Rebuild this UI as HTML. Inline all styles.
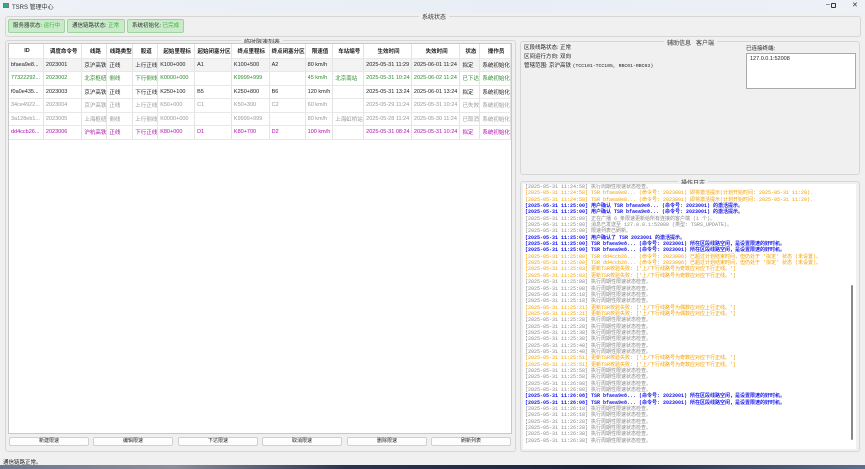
<!DOCTYPE html>
<html><head><meta charset="utf-8"><style>
*{box-sizing:border-box;margin:0;padding:0}
body{width:865px;height:469px;overflow:hidden;background:#f0f0f0;font-family:"Liberation Sans","Noto Sans CJK SC",sans-serif;font-size:6px;color:#222;position:relative}
.a{position:absolute}
.title{left:0;top:0;width:865px;height:13px;background:linear-gradient(90deg,#eef2f7,#e9eef6 60%,#eef1f6);}
.grp{border:1px solid #d6d6d6;border-radius:3px}
.gt{background:#f0f0f0;padding:0 3px;font-size:6px;color:#333}
.badge{top:19px;height:14px;background:#c9ebc9;border:1px solid #9fd49f;border-radius:2px;font-size:5.5px;line-height:12px;padding-left:4px;color:#333}
.badge span{color:#3cb03c}
table{border-collapse:collapse;table-layout:fixed;font-size:5.5px}
td,th{height:13.5px;white-space:nowrap;overflow:hidden;padding-left:2px;border-right:1px solid #e4e4e4;border-bottom:1px solid #e8e8e8;text-align:left;font-weight:normal}
th{height:14px;font-weight:bold;text-align:center;background:#fff}
.g td{color:#2e8b2e}.p td{color:#b010b0}.l td{color:#999}
.btn{top:437px;height:9px;background:#fdfdfd;border:1px solid #d0d0d0;border-radius:2px;font-size:5px;text-align:center;line-height:7px;width:80px}
.log div{height:6.35px;line-height:6.35px;font-size:5px;white-space:nowrap;font-family:"Liberation Mono","Noto Sans CJK SC",monospace}
.k{color:#888}.o{color:#f5a000}.b{color:#1818f0;font-weight:bold}
</style></head><body>
<div class="a title"></div>
<div class="a" style="left:3px;top:3px;width:6px;height:5px;border:1px solid #777;background:#3a8"></div>
<div class="a" style="left:12px;top:2px;font-size:6px;color:#333">TSRS 管理中心</div>
<div class="a" style="left:826px;top:1px;font-size:7px;color:#333">–</div>
<div class="a" style="left:831px;top:3px;width:5px;height:5px;border:1px solid #333;border-radius:1px"></div>
<div class="a" style="left:852px;top:1px;font-size:7px;color:#333">✕</div>

<div class="a grp" style="left:5px;top:16px;width:856px;height:21px"></div>
<div class="a gt" style="left:419px;top:12px">系统状态</div>
<div class="a badge" style="left:8px;width:57px">服务器状态: <span>运行中</span></div>
<div class="a badge" style="left:67px;width:58px">通信链路状态: <span>正常</span></div>
<div class="a badge" style="left:127px;width:57px">系统初始化: <span>已完成</span></div>

<div class="a grp" style="left:5px;top:40px;width:511px;height:412px"></div>
<div class="a gt" style="left:241px;top:37px">临时限速列表</div>
<div class="a" style="left:8px;top:43px;width:504px;height:391px;background:#fff;border:1px solid #c8c8c8">
<table>
<colgroup><col style="width:35px"><col style="width:40px"><col style="width:24px"><col style="width:26px"><col style="width:24px"><col style="width:38px"><col style="width:37px"><col style="width:39px"><col style="width:35px"><col style="width:28px"><col style="width:31px"><col style="width:48px"><col style="width:49px"><col style="width:20px"><col style="width:28px"></colgroup>
<tr><th>ID</th><th>调度命令号</th><th>线路</th><th>线路类型</th><th>股道</th><th>起始里程标</th><th>起始闭塞分区</th><th>终点里程标</th><th>终点闭塞分区</th><th>限速值</th><th>车站编号</th><th>生效时间</th><th>失效时间</th><th>状态</th><th>操作员</th></tr>
<tr style="background:#f3f3f3"><td>bfaea9e8...</td><td>2023001</td><td>京沪高铁</td><td>正线</td><td>上行正线</td><td>K100+000</td><td>A1</td><td>K100+500</td><td>A2</td><td>80 km/h</td><td></td><td>2025-05-31 11:29</td><td>2025-06-01 11:24</td><td>拟定</td><td>系统初始化</td></tr>
<tr class="g"><td>77322292...</td><td>2023002</td><td>北京枢纽</td><td>侧线</td><td>下行侧线</td><td>K0000+000</td><td></td><td>K9999+999</td><td></td><td>45 km/h</td><td>北京南站</td><td>2025-05-31 10:24</td><td>2025-06-02 11:24</td><td>已下达</td><td>系统初始化</td></tr>
<tr><td>f0a0e435...</td><td>2023003</td><td>京沪高铁</td><td>正线</td><td>下行正线</td><td>K250+100</td><td>B5</td><td>K250+800</td><td>B6</td><td>120 km/h</td><td></td><td>2025-05-31 13:24</td><td>2025-06-01 13:24</td><td>拟定</td><td>系统初始化</td></tr>
<tr class="l"><td>34ce4922...</td><td>2023004</td><td>京沪高铁</td><td>正线</td><td>上行正线</td><td>K50+000</td><td>C1</td><td>K50+300</td><td>C2</td><td>60 km/h</td><td></td><td>2025-05-29 11:24</td><td>2025-05-31 10:24</td><td>已失效</td><td>系统初始化</td></tr>
<tr class="l"><td>3a128eb1...</td><td>2023005</td><td>上海枢纽</td><td>侧线</td><td>上行侧线</td><td>K0000+000</td><td></td><td>K9999+999</td><td></td><td>80 km/h</td><td>上海虹桥站</td><td>2025-05-28 11:24</td><td>2025-05-30 11:24</td><td>已取消</td><td>系统初始化</td></tr>
<tr class="p"><td>dd4ccb26...</td><td>2023006</td><td>沪杭高铁</td><td>正线</td><td>下行正线</td><td>K80+000</td><td>D1</td><td>K80+700</td><td>D2</td><td>100 km/h</td><td></td><td>2025-05-31 08:24</td><td>2025-05-31 10:24</td><td>拟定</td><td>系统初始化</td></tr>
</table></div>
<div class="a btn" style="left:9px">新建限速</div>
<div class="a btn" style="left:93px">编辑限速</div>
<div class="a btn" style="left:178px">下达限速</div>
<div class="a btn" style="left:262px">取消限速</div>
<div class="a btn" style="left:347px">删除限速</div>
<div class="a btn" style="left:431px">刷新列表</div>
<div class="a" style="left:3px;top:458px;font-size:5.5px">通信链路正常。</div>
<div class="a" style="left:0;top:465px;width:865px;height:4px;background:linear-gradient(90deg,#6b7890,#8a8e9c 20%,#2a3450 40%,#1c2540 70%,#5a7090)"></div>

<div class="a grp" style="left:520px;top:41px;width:340px;height:134px"></div>
<div class="a gt" style="left:664px;top:38px">辅助信息&nbsp;&nbsp; 客户端</div>
<div class="a" style="left:524px;top:44px;font-size:5.5px;line-height:9px">区段线路状态: 正常<br>区间运行方向: 双向<br>管辖范围: 京沪高铁 <span style="font-family:'Liberation Mono',monospace;font-size:4.8px">(TCC101-TCC105, RBC01-RBC03)</span></div>
<div class="a" style="left:746px;top:44px;font-size:5.5px">已连接终端:</div>
<div class="a" style="left:746px;top:53px;width:110px;height:36px;background:#fff;border:1px solid #aaa;font-size:5.5px;padding:2px 3px">127.0.0.1:52008</div>

<div class="a grp" style="left:520px;top:181px;width:340px;height:271px"></div>
<div class="a gt" style="left:678px;top:178px">操作日志</div>
<div class="a" style="left:523px;top:184px;width:333px;height:265px;background:#fff"></div>
<div class="a" style="left:851px;top:285px;width:2px;height:155px;background:#888;border-radius:1px"></div>
<div class="a log" style="left:525px;top:184px;width:322px;height:264px;overflow:hidden">
<div class="k">[2025-05-31 11:24:58] 执行周期性限速状态检查。</div>
<div class="o">[2025-05-31 11:24:58] TSR bfaea9e8... (命令号: 2023001) 即将激活提示(计划开始时间: 2025-05-31 11:29).</div>
<div class="o">[2025-05-31 11:24:58] TSR bfaea9e8... (命令号: 2023001) 即将激活提示(计划开始时间: 2025-05-31 11:29).</div>
<div class="b">[2025-05-31 11:25:00] 用户确认 TSR bfaea9e8... (命令号: 2023001) 的激活提示。</div>
<div class="b">[2025-05-31 11:25:00] 用户确认 TSR bfaea9e8... (命令号: 2023001) 的激活提示。</div>
<div class="k">[2025-05-31 11:25:00] 正在广播 6 条限速更新给所有连接的客户端 (1 个)。</div>
<div class="k">[2025-05-31 11:25:00] 消息已发送至 127.0.0.1:52008 (类型: TSRS_UPDATE)。</div>
<div class="k">[2025-05-31 11:25:00] 限速列表已刷新。</div>
<div class="b">[2025-05-31 11:25:00] 用户确认了 TSR 2023001 的激活提示。</div>
<div class="b">[2025-05-31 11:25:00] TSR bfaea9e8... (命令号: 2023001) 所在区段线路空闲，是设置限速的好时机。</div>
<div class="b">[2025-05-31 11:25:00] TSR bfaea9e8... (命令号: 2023001) 所在区段线路空闲，是设置限速的好时机。</div>
<div class="o">[2025-05-31 11:25:00] TSR dd4ccb26... (命令号: 2023006) 已超过计划结束时间，但仍处于 '拟定' 状态 (未设置)。</div>
<div class="o">[2025-05-31 11:25:00] TSR dd4ccb26... (命令号: 2023006) 已超过计划结束时间，但仍处于 '拟定' 状态 (未设置)。</div>
<div class="o">[2025-05-31 11:25:03] 更新TSR校验失败: ['上/下行线路号为奇数应对应下行正线。']</div>
<div class="o">[2025-05-31 11:25:03] 更新TSR校验失败: ['上/下行线路号为奇数应对应下行正线。']</div>
<div class="k">[2025-05-31 11:25:08] 执行周期性限速状态检查。</div>
<div class="k">[2025-05-31 11:25:08] 执行周期性限速状态检查。</div>
<div class="k">[2025-05-31 11:25:18] 执行周期性限速状态检查。</div>
<div class="k">[2025-05-31 11:25:18] 执行周期性限速状态检查。</div>
<div class="o">[2025-05-31 11:25:21] 更新TSR校验失败: ['上/下行线路号为偶数应对应上行正线。']</div>
<div class="o">[2025-05-31 11:25:21] 更新TSR校验失败: ['上/下行线路号为偶数应对应上行正线。']</div>
<div class="k">[2025-05-31 11:25:28] 执行周期性限速状态检查。</div>
<div class="k">[2025-05-31 11:25:28] 执行周期性限速状态检查。</div>
<div class="k">[2025-05-31 11:25:38] 执行周期性限速状态检查。</div>
<div class="k">[2025-05-31 11:25:38] 执行周期性限速状态检查。</div>
<div class="k">[2025-05-31 11:25:48] 执行周期性限速状态检查。</div>
<div class="k">[2025-05-31 11:25:48] 执行周期性限速状态检查。</div>
<div class="o">[2025-05-31 11:25:51] 更新TSR校验失败: ['上/下行线路号为奇数应对应下行正线。']</div>
<div class="o">[2025-05-31 11:25:51] 更新TSR校验失败: ['上/下行线路号为奇数应对应下行正线。']</div>
<div class="k">[2025-05-31 11:25:58] 执行周期性限速状态检查。</div>
<div class="k">[2025-05-31 11:25:58] 执行周期性限速状态检查。</div>
<div class="k">[2025-05-31 11:26:08] 执行周期性限速状态检查。</div>
<div class="k">[2025-05-31 11:26:08] 执行周期性限速状态检查。</div>
<div class="b">[2025-05-31 11:26:08] TSR bfaea9e8... (命令号: 2023001) 所在区段线路空闲，是设置限速的好时机。</div>
<div class="b">[2025-05-31 11:26:08] TSR bfaea9e8... (命令号: 2023001) 所在区段线路空闲，是设置限速的好时机。</div>
<div class="k">[2025-05-31 11:26:18] 执行周期性限速状态检查。</div>
<div class="k">[2025-05-31 11:26:18] 执行周期性限速状态检查。</div>
<div class="k">[2025-05-31 11:26:28] 执行周期性限速状态检查。</div>
<div class="k">[2025-05-31 11:26:28] 执行周期性限速状态检查。</div>
<div class="k">[2025-05-31 11:26:38] 执行周期性限速状态检查。</div>
<div class="k">[2025-05-31 11:26:38] 执行周期性限速状态检查。</div>
</div>
</body></html>
